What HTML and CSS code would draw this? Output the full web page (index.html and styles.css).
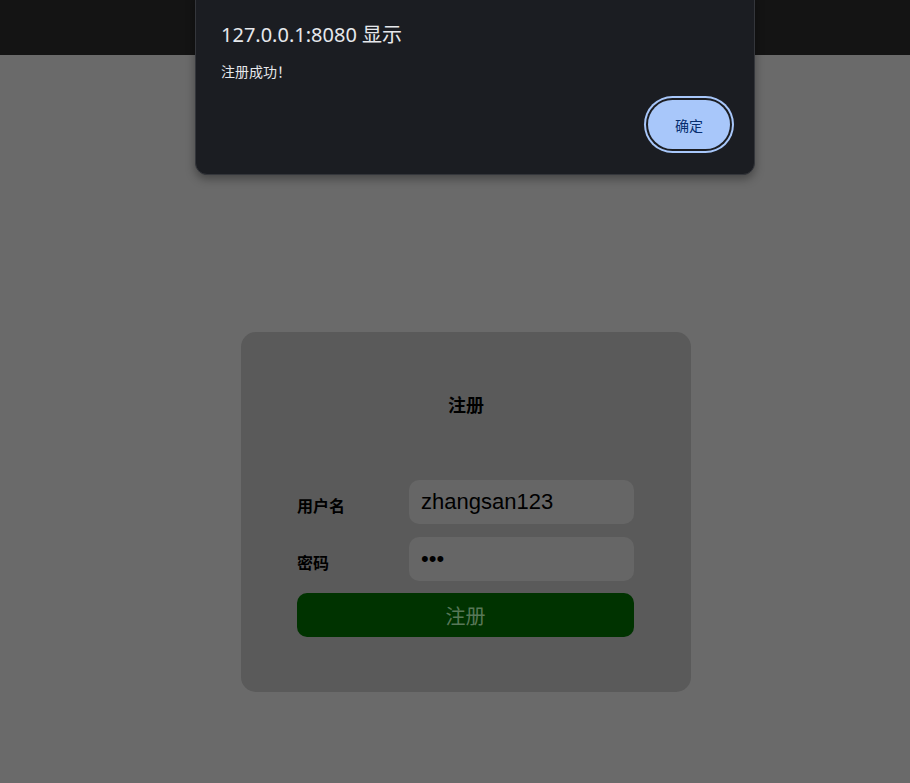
FILE: index.html
```html
<!DOCTYPE html>
<html lang="zh-CN">
<head>
    <meta charset="UTF-8">
    <meta name="viewport" content="width=device-width, initial-scale=1.0">
    <title>注册</title>
    <link rel="stylesheet" href="styles.css">
</head>
<body>

    <div class="topbar"></div>

    <div class="main">
        <form class="card">
            <h2 class="card-title">注册</h2>
            <div class="row">
                <label class="label" for="username">用户名</label>
                <input class="field" id="username" type="text" value="zhangsan123">
            </div>
            <div class="row">
                <label class="label" for="password">密码</label>
                <input class="field" id="password" type="password" value="123">
            </div>
            <button class="btn-submit" type="button">注册</button>
        </form>
    </div>

    <div class="alert">
        <div class="alert-title">127.0.0.1:8080 显示</div>
        <div class="alert-msg">注册成功！</div>
        <div class="alert-actions">
            <button class="alert-btn" type="button">确定</button>
        </div>
    </div>

</body>
</html>
```
FILE: styles.css
```css
body {
    margin: 0;
    height: 783px;
    background: #6a6a6a;
    font-family: "Noto Sans", "Noto Sans CJK SC", sans-serif;
    overflow: hidden;
}

.topbar {
    height: 55px;
    background: #141414;
}

.main {
    display: flex;
    justify-content: center;
    padding: 277px 0 0 22px;
}

.card {
    width: 338px;
    padding: 56px 56px 55px;
    background: #5a5a5a;
    border-radius: 15px;
}

.card-title {
    margin: 0 0 58px;
    font-size: 18px;
    line-height: 34px;
    text-align: center;
    color: #000;
}

.row {
    display: flex;
    align-items: center;
    margin-bottom: 13px;
}

.label {
    width: 112px;
    font-size: 16px;
    font-weight: bold;
    color: #000;
    padding-top: 5px;
}

.field {
    width: 225px;
    height: 44px;
    box-sizing: border-box;
    padding: 0 12px;
    border: none;
    border-radius: 10px;
    background: #666666;
    font-family: "Liberation Sans", Arial, sans-serif;
    font-size: 22px;
    color: #000;
    outline: none;
}

.btn-submit {
    display: block;
    width: 337px;
    height: 44px;
    margin-top: -1px;
    border: none;
    border-radius: 10px;
    background: #003300;
    color: #587858;
    font-family: "Noto Sans CJK SC", sans-serif;
    font-size: 20px;
}

.alert {
    position: absolute;
    top: -12px;
    left: 195px;
    width: 560px;
    box-sizing: border-box;
    padding: 34px 20px 25px 25px;
    background: #1b1d22;
    border: 1px solid #34363b;
    border-radius: 12px;
    box-shadow: 0 4px 10px rgba(0, 0, 0, 0.35);
    color: #e6e8ec;
}

.alert-title {
    font-size: 20px;
    line-height: 24px;
}

.alert-msg {
    margin-top: 15px;
    font-size: 14px;
    line-height: 20px;
}

.alert-actions {
    display: flex;
    justify-content: flex-end;
    margin-top: 18px;
}

.alert-btn {
    width: 82px;
    height: 49px;
    border: none;
    border-radius: 25px;
    background: #a8c7fa;
    color: #062e6f;
    font-family: "Noto Sans CJK SC", sans-serif;
    font-size: 14px;
    box-shadow: 0 0 0 2px #1b1d22, 0 0 0 4px #a8c7fa;
    margin-right: 4px;
}
```
